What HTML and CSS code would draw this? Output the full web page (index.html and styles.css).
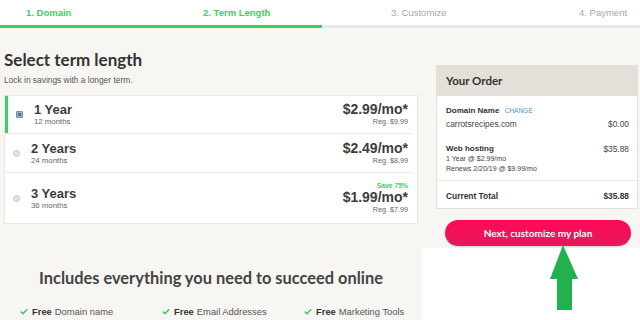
FILE: index.html
```html
<!DOCTYPE html>
<html>
<head>
    <meta charset="UTF-8">
    <meta name="viewport" content="width=device-width, initial-scale=1.0">
    <title>Select term length</title>
    <link rel="stylesheet" href="styles.css">
</head>
<body>
    <header class="steps">
        <nav class="step-list">
            <span class="step done">1. Domain</span>
            <span class="step done">2. Term Length</span>
            <span class="step">3. Customize</span>
            <span class="step">4. Payment</span>
        </nav>
        <div class="track"><div class="fill" style="width: 50.3%"></div></div>
    </header>

    <main class="checkout">
        <section class="terms">
            <h1>Select term length</h1>
            <p class="lead">Lock in savings with a longer term.</p>
            <div class="term-card">
                <div class="term selected">
                    <span class="radio"></span>
                    <span class="term-name"><strong>1 Year</strong><small>12 months</small></span>
                    <span class="term-price"><strong>$2.99/mo*</strong><small>Reg. $9.99</small></span>
                </div>
                <div class="term">
                    <span class="radio"></span>
                    <span class="term-name"><strong>2 Years</strong><small>24 months</small></span>
                    <span class="term-price"><strong>$2.49/mo*</strong><small>Reg. $8.99</small></span>
                </div>
                <div class="term tall">
                    <span class="radio"></span>
                    <span class="term-name"><strong>3 Years</strong><small>36 months</small></span>
                    <span class="term-price"><em>Save 75%</em><strong>$1.99/mo*</strong><small>Reg. $7.99</small></span>
                </div>
            </div>
        </section>

        <aside class="order">
            <div class="order-box">
                <h2>Your Order</h2>
                <div class="order-body">
                    <div class="order-line">
                        <b>Domain Name</b> <a href="#" class="change">CHANGE</a>
                    </div>
                    <div class="order-line split">
                        <span>carrotsrecipes.com</span><span>$0.00</span>
                    </div>
                    <div class="order-line split hosting">
                        <b>Web hosting</b><span>$35.88</span>
                    </div>
                    <div class="order-note">1 Year @ $2.99/mo</div>
                    <div class="order-note">Renews 2/20/19 @ $9.99/mo</div>
                </div>
                <div class="order-total split">
                    <b>Current Total</b><b>$35.88</b>
                </div>
            </div>
            <button class="next">Next, customize my plan</button>
        </aside>
    </main>

    <section class="includes">
        <h2>Includes everything you need to succeed online</h2>
        <ul class="perks">
            <li><svg viewBox="0 0 10 8"><path d="M1 4.2 L3.8 6.8 L9 1.2" /></svg><b>Free</b> Domain name</li>
            <li><svg viewBox="0 0 10 8"><path d="M1 4.2 L3.8 6.8 L9 1.2" /></svg><b>Free</b> Email Addresses</li>
            <li><svg viewBox="0 0 10 8"><path d="M1 4.2 L3.8 6.8 L9 1.2" /></svg><b>Free</b> Marketing Tools</li>
        </ul>
    </section>

    <!-- annotation arrow pointing at the button -->
    <svg class="arrow" viewBox="0 0 30 67">
        <polygon points="14,1 1,35 8,35 8,66 23,66 23,35 29,35" />
    </svg>
</body>
</html>
```

FILE: styles.css
```css
body {
    margin: 0;
    background: #fff;
    font-family: 'Liberation Sans', Arial, sans-serif;
    color: #3b3b3b;
    position: relative;
}
.steps {
    background: #fff;
    height: 28px;
    display: flex;
    flex-direction: column;
}
.step-list {
    display: grid;
    grid-template-columns: 177px 188px 188px 1fr;
    padding-left: 26px;
    height: 25px;
    align-items: center;
}
.step {
    font-size: 9.5px;
    color: #a8a8a8;
}
.step.done {
    color: #3dcd66;
    font-weight: bold;
}
.track {
    height: 3px;
    background: #e8e8e8;
}
.fill {
    height: 100%;
    background: #3dcd66;
}

.checkout {
    background: #f7f6f2;
    height: 220px;
    display: grid;
    grid-template-columns: 414px 202px;
    column-gap: 18px;
    padding-left: 4px;
}
.terms h1 {
    font-family: 'Lato', sans-serif;
    font-weight: 700;
    font-size: 17px;
    line-height: 22px;
    margin: 21px 0 0;
    color: #333;
}
.lead {
    font-size: 8.4px;
    color: #555;
    margin: 4px 0 0;
}
.term-card {
    margin-top: 10px;
    background: #fff;
    border: 1px solid #e9e7e2;
}
.term {
    display: flex;
    align-items: center;
    height: 37px;
    margin-right: 5px;
    padding: 0 4px 0 8px;
}
.term + .term {
    border-top: 1px solid #ebebeb;
    height: 38px;
}
.term.tall {
    height: 50px;
}
.term.selected {
    border-left: 3px solid #3dcd66;
}
.radio {
    width: 5px;
    height: 5px;
    border-radius: 50%;
    background: #e2e2e2;
    border: 1px solid #c8c8c8;
}
.selected .radio {
    border-radius: 1px;
    background: #2f7fc4;
    border-color: #8a8a8a;
    box-shadow: inset 0 0 0 1px #9fb4c8;
}
.term-name {
    display: flex;
    flex-direction: column;
    margin-left: 11px;
    flex: 1;
}
.term-name strong, .term-price strong {
    font-size: 13px;
    line-height: 15px;
    color: #3d3d3d;
}
.term-price strong {
    font-size: 14px;
}
.term-name small, .term-price small {
    font-size: 7.8px;
    line-height: 10px;
    color: #666;
}
.term-price {
    display: flex;
    flex-direction: column;
    align-items: flex-end;
}
.term-price small {
    font-size: 7.2px;
}
.term-price em {
    font-style: normal;
    font-weight: bold;
    font-size: 6.8px;
    line-height: 9px;
    color: #3dcd66;
}

.order {
    padding-top: 37px;
}
.order-box {
    background: #fff;
    border: 1px solid #e4e0da;
}
.order-box h2 {
    margin: 0;
    height: 30px;
    line-height: 29px;
    padding-left: 9px;
    background: #e4dfd8;
    font-family: 'Lato', sans-serif;
    font-weight: 700;
    font-size: 11.5px;
    color: #333;
}
.order-body {
    padding: 9px 8px 6px 9px;
    border-bottom: 1px solid #ebe8e4;
}
.order-line {
    font-size: 8.4px;
    line-height: 10px;
    color: #444;
}
.order-line b {
    font-size: 8px;
    color: #333;
}
.split {
    display: flex;
    justify-content: space-between;
}
.order-line.split {
    margin-top: 3px;
}
.order-line.hosting {
    margin-top: 15px;
    align-items: flex-start;
}
.change {
    font-size: 6.5px;
    color: #4a90e2;
    text-decoration: none;
    margin-left: 3px;
}
.order-note {
    font-size: 7px;
    line-height: 10px;
    color: #444;
}
.order-total {
    padding: 10px 8px 7px 9px;
    font-size: 8.4px;
    line-height: 10px;
    color: #333;
}
.next {
    display: block;
    width: 186px;
    height: 26px;
    margin: 11px 0 0 9px;
    border: none;
    border-radius: 13px;
    background: linear-gradient(#ff0a58, #e4195b);
    color: #fff;
    font-family: 'Lato', sans-serif;
    font-weight: 700;
    font-size: 10px;
    box-shadow: 0 1px 2px rgba(0,0,0,0.15);
}

.includes {
    background: #f7f6f2;
    width: 422px;
    height: 72px;
    overflow: hidden;
}
.includes h2 {
    margin: 0;
    padding-top: 20px;
    text-align: center;
    font-family: 'Lato', sans-serif;
    font-weight: 700;
    font-size: 16.4px;
    line-height: 20px;
    color: #444;
}
.perks {
    list-style: none;
    margin: 18px 0 0;
    padding-left: 20px;
    display: grid;
    grid-template-columns: 142px 142px 1fr;
}
.perks li {
    font-size: 9.4px;
    color: #555;
    display: flex;
    align-items: center;
}
.perks b {
    color: #333;
    margin-right: 3px;
}
.perks svg {
    width: 8px;
    height: 7px;
    margin-right: 4px;
    fill: none;
    stroke: #3dcd66;
    stroke-width: 2;
}

.arrow {
    position: absolute;
    left: 549px;
    top: 244px;
    width: 30px;
    height: 67px;
    fill: #22b14c;
}
```
